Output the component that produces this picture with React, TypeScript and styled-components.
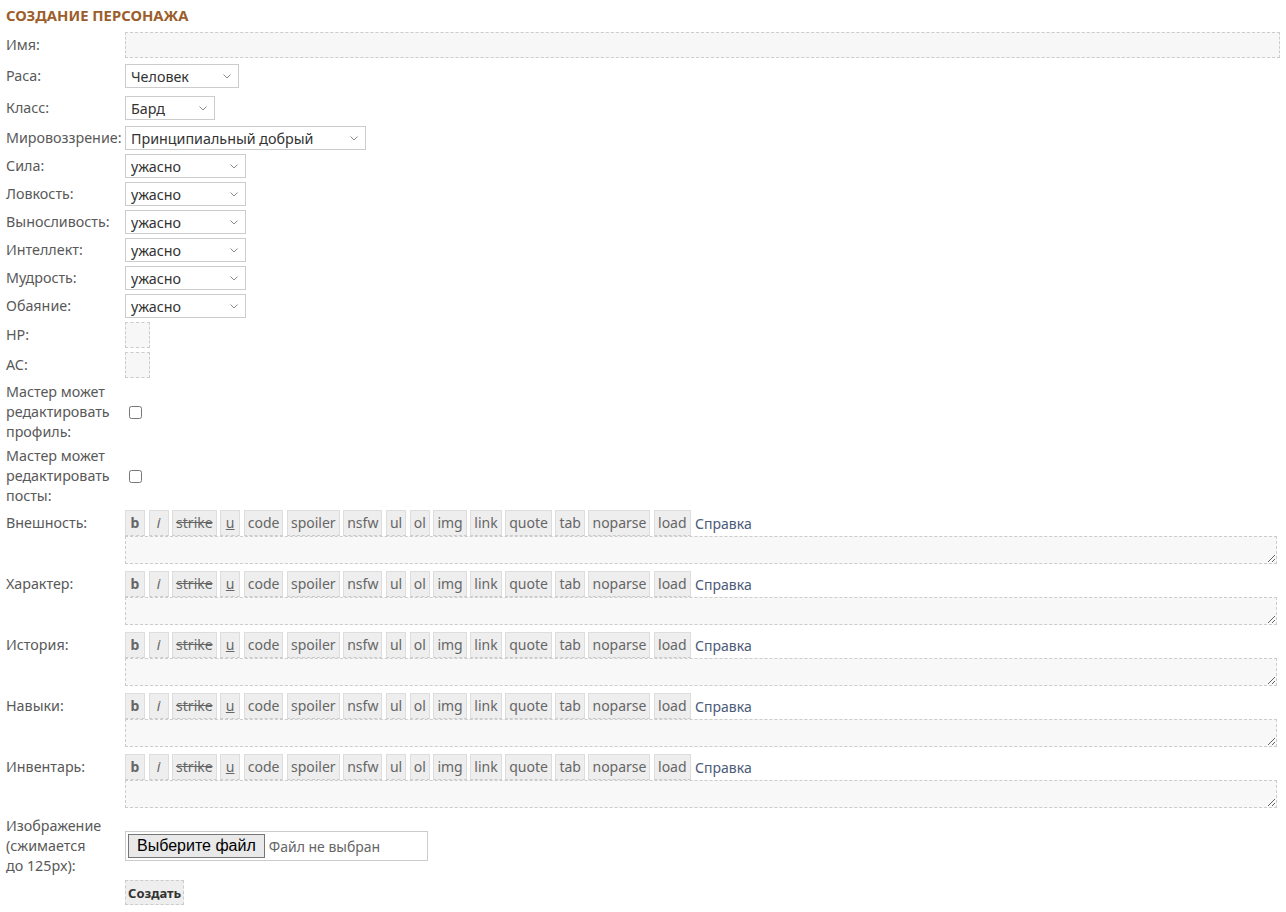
import React from "react";
import styled, { createGlobalStyle } from "styled-components";

const Global = createGlobalStyle`
  html, body { margin: 0; padding: 0; background: #fff; }
  body { font-family: "Noto Sans", "Open Sans", sans-serif; font-size: 14px; color: #555; }
`;

const Page = styled.div`
  padding: 4px 6px 8px 6px;
`;

const Title = styled.h2`
  margin: 0 0 6px 0;
  font-size: 14.8px;
  line-height: 22px;
  font-weight: 700;
  color: #9c5e2b;
  text-transform: uppercase;
`;

const Form = styled.div`
  display: grid;
  grid-template-columns: 119px 1fr;
  row-gap: 4px;
`;

const Label = styled.div<{ $top?: boolean; $mt?: number }>`
  align-self: ${(p) => (p.$top ? "start" : "center")};
  padding-top: ${(p) => (p.$top ? "3px" : "0")};
  margin-top: ${(p) => p.$mt || 0}px;
  line-height: 20px;
  font-size: 14.3px;
  color: #595959;
`;

const Cell = styled.div<{ $mt?: number }>`
  align-self: center;
  min-width: 0;
  margin-top: ${(p) => p.$mt || 0}px;
`;

const TextInput = styled.input`
  display: block;
  box-sizing: border-box;
  width: 100%;
  height: 26px;
  border: 1px dashed #ccc;
  background: #f7f7f7;
  font: inherit;
  outline: none;
`;

const SmallInput = styled(TextInput)`
  width: 25px;
`;

const SelectWrap = styled.div<{ $w: number }>`
  position: relative;
  width: ${(p) => p.$w}px;
  height: 24px;
`;

const Select = styled.select`
  display: block;
  appearance: none;
  -webkit-appearance: none;
  box-sizing: border-box;
  width: 100%;
  height: 24px;
  border: 1px solid #ccc;
  border-radius: 0;
  background: #fff;
  color: #333;
  font-family: "Noto Sans", "Open Sans", sans-serif;
  font-size: 14.3px;
  padding: 0 20px 0 5px;
  outline: none;
`;

const Chevron = styled.svg`
  position: absolute;
  right: 8px;
  top: 10px;
  width: 8px;
  height: 5px;
  pointer-events: none;
`;

const Check = styled.input`
  margin: 0 0 0 4px;
  width: 13px;
  height: 13px;
  display: block;
`;

const Toolbar = styled.div`
  display: flex;
  align-items: center;
  gap: 3.55px;
  height: 26px;
`;

const TagButton = styled.span<{ $style?: string }>`
  box-sizing: border-box;
  height: 26px;
  line-height: 24px;
  padding: 0 3px;
  background: #eee;
  border: 1px solid #ddd;
  border-bottom: 1px dashed #ccc;
  color: #666;
  font-size: 14px;
  font-weight: ${(p) => (p.$style === "b" ? 700 : 400)};
  font-style: ${(p) => (p.$style === "i" ? "italic" : "normal")};
  text-decoration: ${(p) =>
    p.$style === "s" ? "line-through" : p.$style === "u" ? "underline" : "none"};
  min-width: 20px;
  text-align: center;
`;

const Help = styled.span`
  color: #4c5a78;
  margin-left: 1px;
`;

const Area = styled.textarea`
  display: block;
  box-sizing: border-box;
  width: calc(100% - 3px);
  height: 28px;
  margin-bottom: 3px;
  border: 1px dashed #ccc;
  background: #f8f8f8;
  font: inherit;
  outline: none;
`;

const FileBox = styled.div`
  display: flex;
  align-items: center;
  box-sizing: border-box;
  width: 303px;
  height: 30px;
  border: 1px solid #ccc;
  padding: 0 2px;
  gap: 4px;
`;

const FileButton = styled.button`
  height: 24px;
  padding: 0 8px;
  font-family: "Liberation Sans", Arial, sans-serif;
  font-size: 16px;
  color: #000;
  background: #e9e9e9;
  border: 1px solid #767676;
  border-radius: 0;
`;

const FileText = styled.span`
  color: #666;
  font-size: 14px;
`;

const Submit = styled.button`
  height: 25px;
  padding: 0 2px;
  background: #eee;
  border: 1px dashed #ccc;
  color: #333;
  font-family: "Noto Sans", "Open Sans", sans-serif;
  font-size: 13px;
  font-weight: 700;
`;

const tags: { t: string; s?: string }[] = [
  { t: "b", s: "b" },
  { t: "i", s: "i" },
  { t: "strike", s: "s" },
  { t: "u", s: "u" },
  { t: "code" },
  { t: "spoiler" },
  { t: "nsfw" },
  { t: "ul" },
  { t: "ol" },
  { t: "img" },
  { t: "link" },
  { t: "quote" },
  { t: "tab" },
  { t: "noparse" },
  { t: "load" },
];

const stats = ["Сила", "Ловкость", "Выносливость", "Интеллект", "Мудрость", "Обаяние"];
const texts = ["Внешность", "Характер", "История", "Навыки", "Инвентарь"];

const Dropdown = ({ w, value }: { w: number; value: string }) => (
  <SelectWrap $w={w}>
    <Select>
      <option>{value}</option>
    </Select>
    <Chevron viewBox="0 0 8 5">
      <path d="M0.5 0.5 L4 4 L7.5 0.5" fill="none" stroke="#8a8a8a" strokeWidth="1" />
    </Chevron>
  </SelectWrap>
);

const Editor = () => (
  <Cell>
    <Toolbar>
      {tags.map((g) => (
        <TagButton key={g.t} $style={g.s}>
          {g.t}
        </TagButton>
      ))}
      <Help>Справка</Help>
    </Toolbar>
    <Area />
  </Cell>
);

export default function App() {
  return (
    <Page>
      <Global />
      <Title>Создание персонажа</Title>
      <Form>
        <Label>Имя:</Label>
        <Cell>
          <TextInput />
        </Cell>

        <Label $mt={2}>Раса:</Label>
        <Cell $mt={2}>
          <Dropdown w={114} value="Человек" />
        </Cell>

        <Label $mt={4}>Класс:</Label>
        <Cell $mt={4}>
          <Dropdown w={90} value="Бард" />
        </Cell>

        <Label $mt={2}>Мировоззрение:</Label>
        <Cell $mt={2}>
          <Dropdown w={241} value="Принципиальный добрый" />
        </Cell>

        {stats.map((s) => (
          <React.Fragment key={s}>
            <Label>{s}:</Label>
            <Cell>
              <Dropdown w={121} value="ужасно" />
            </Cell>
          </React.Fragment>
        ))}

        <Label>HP:</Label>
        <Cell>
          <SmallInput />
        </Cell>

        <Label>AC:</Label>
        <Cell>
          <SmallInput />
        </Cell>

        <Label>Мастер может редактировать профиль:</Label>
        <Cell>
          <Check type="checkbox" />
        </Cell>

        <Label>Мастер может редактировать посты:</Label>
        <Cell>
          <Check type="checkbox" />
        </Cell>

        {texts.map((t) => (
          <React.Fragment key={t}>
            <Label $top>{t}:</Label>
            <Editor />
          </React.Fragment>
        ))}

        <Label $mt={1}>
          Изображение
          <br />
          (сжимается
          <br />
          до 125px):
        </Label>
        <Cell $mt={1}>
          <FileBox>
            <FileButton>Выберите файл</FileButton>
            <FileText>Файл не выбран</FileText>
          </FileBox>
        </Cell>

        <div />
        <Cell>
          <Submit>Создать</Submit>
        </Cell>
      </Form>
    </Page>
  );
}
